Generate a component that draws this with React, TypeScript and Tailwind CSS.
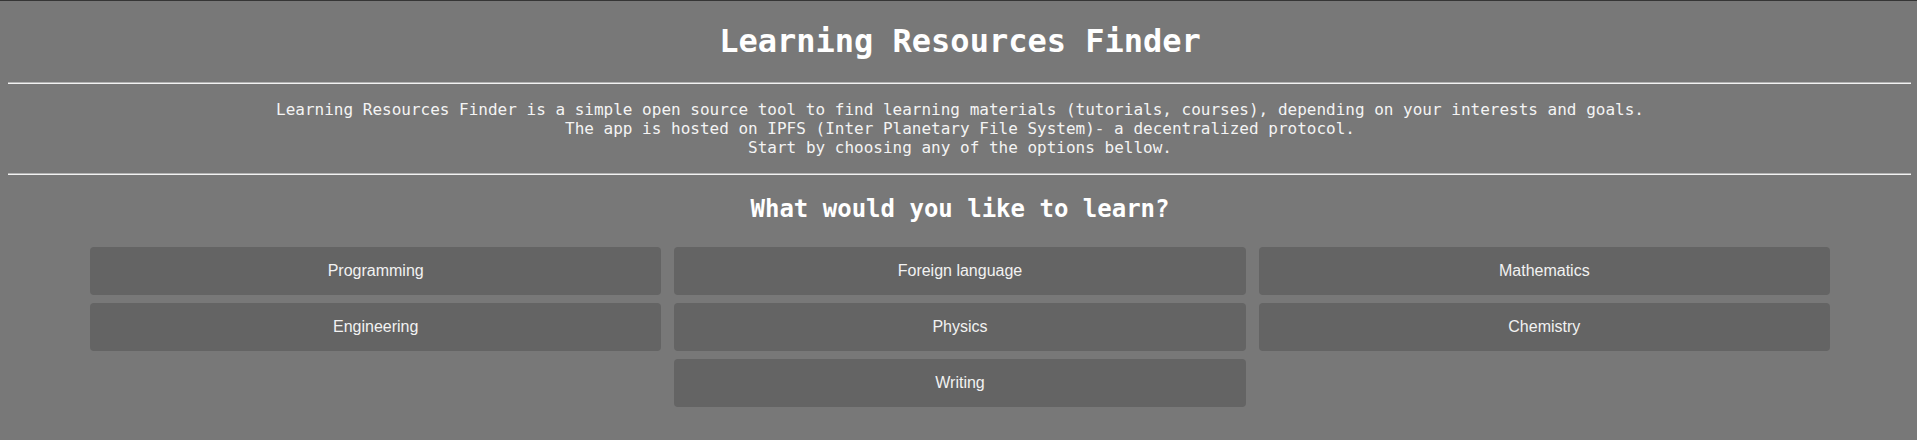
import React from "react";

const mono = { fontFamily: '"DejaVu Sans Mono", "Liberation Mono", monospace' };

const items: { label: string; col: string }[] = [
  { label: "Programming", col: "" },
  { label: "Foreign language", col: "" },
  { label: "Mathematics", col: "" },
  { label: "Engineering", col: "" },
  { label: "Physics", col: "" },
  { label: "Chemistry", col: "" },
  { label: "Writing", col: "col-start-2" },
];

function Rule() {
  return <div className="ml-2 mr-[6px] h-0 border-t border-b border-t-[#b3b3b3] border-b-[#f2f2f2]" />;
}

export default function App() {
  return (
    <div className="min-h-[440px] w-full bg-[#787878] border-t border-t-[#353535] text-white">
      <div className="flex h-[81px] items-center justify-center pl-[3px]">
        <h1 className="text-[32px] font-bold leading-[37px] text-white" style={mono}>
          Learning Resources Finder
        </h1>
      </div>
      <Rule />
      <div className="py-4 pl-[3px] text-center text-[16px] leading-[19px] text-[#f4f4f4]" style={mono}>
        <p>
          Learning Resources Finder is a simple open source tool to find learning materials (tutorials, courses), depending on your interests and goals.
        </p>
        <p>The app is hosted on IPFS (Inter Planetary File System)- a decentralized protocol.</p>
        <p>Start by choosing any of the options bellow.</p>
      </div>
      <Rule />
      <h2
        className="mt-[20px] mb-[24px] pl-[3px] text-center text-[24px] font-bold leading-[28px] text-white"
        style={mono}
      >
        What would you like to learn?
      </h2>
      <div className="ml-[90px] mr-[87px] grid grid-cols-3 gap-x-[13px] gap-y-2">
        {items.map((it) => (
          <button
            key={it.label}
            className={`${it.col} flex h-12 items-center justify-center rounded-[4px] bg-[#646464] text-[16px] text-[#f2f2f2]`}
            style={{ fontFamily: '"Liberation Sans", Arial, sans-serif' }}
          >
            {it.label}
          </button>
        ))}
      </div>
    </div>
  );
}
